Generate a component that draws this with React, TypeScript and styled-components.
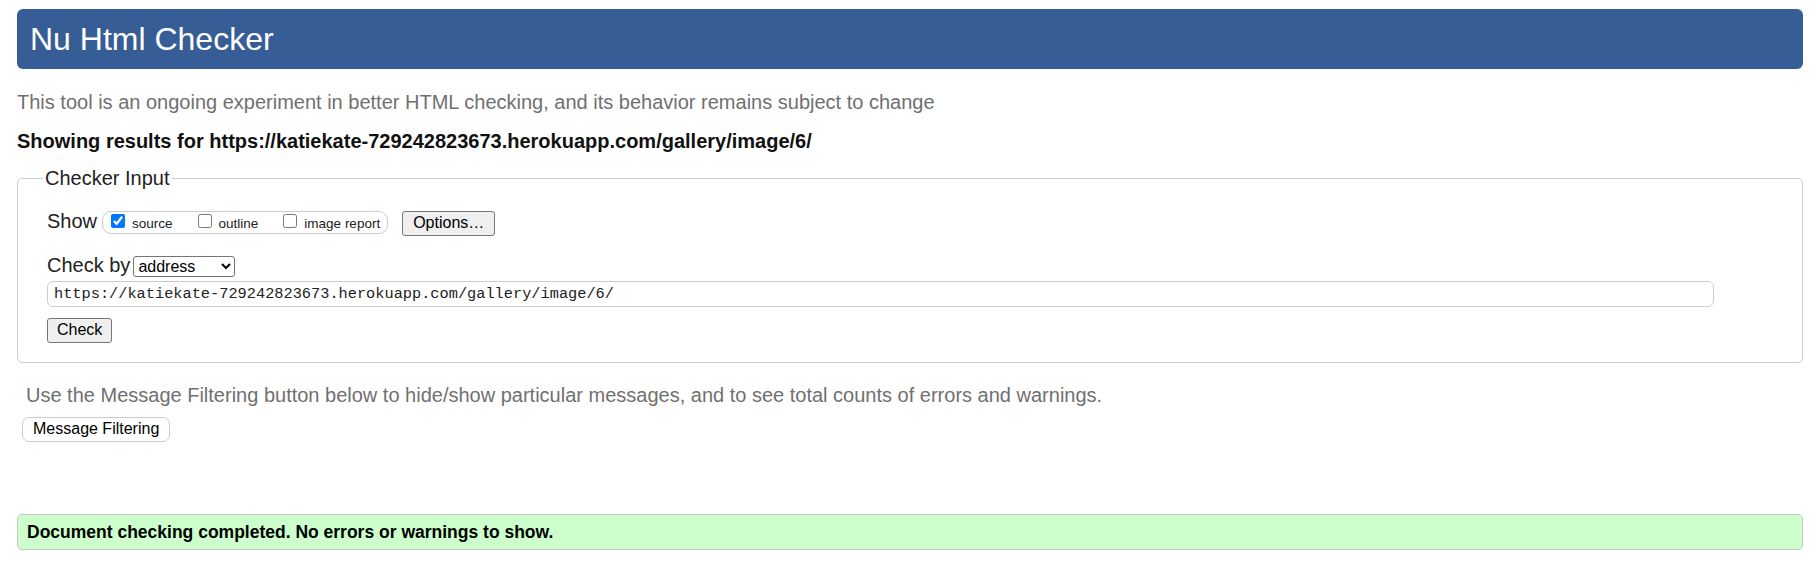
import React from "react";
import styled, { createGlobalStyle } from "styled-components";

const GlobalStyle = createGlobalStyle`
	body {
		margin: 0;
		background: #fff;
		font-family: "Liberation Sans", Arial, sans-serif;
	}
`;

const Page = styled.div`
	padding: 9px 15px 0 17px;
`;

const Title = styled.h1`
	margin: 0;
	padding: 12px 13px;
	background: #365d95;
	color: #fff;
	font-size: 32px;
	font-weight: normal;
	line-height: 36px;
	border-radius: 6px;
`;

const Note = styled.p<{ $indent?: number }>`
	margin: 0;
	padding-left: ${(p) => p.$indent || 0}px;
	font-size: 20px;
	line-height: 23px;
	color: #707070;
`;

const Intro = styled(Note)`
	margin-top: 22px;
`;

const ResultsFor = styled.p`
	margin: 16px 0 0;
	font-size: 20px;
	line-height: 23px;
	font-weight: bold;
	color: #111;
`;

const Fieldset = styled.fieldset`
	margin: 14px 0 0;
	padding: 0;
	min-width: 0;
	border: 1px solid #ccc;
	border-radius: 5px;
`;

const Legend = styled.legend`
	margin-left: 25px;
	padding: 0 2px;
	font-size: 20px;
	line-height: 23px;
	color: #222;
`;

const FieldsetBody = styled.div`
	padding: 20px 88px 19px 29px;
`;

const Row = styled.div<{ $top?: number }>`
	display: flex;
	align-items: baseline;
	margin-top: ${(p) => p.$top || 0}px;
`;

const Label = styled.span`
	font-size: 20px;
	line-height: 23px;
	color: #222;
`;

const Pill = styled.div`
	display: inline-flex;
	align-items: center;
	gap: 25px;
	box-sizing: border-box;
	height: 23px;
	margin-left: 5px;
	padding: 0 7px 0 8px;
	border: 1px solid #ccc;
	border-radius: 9px;
`;

const Option = styled.label`
	display: inline-flex;
	align-items: baseline;
	font-size: 13.5px;
	color: #222;
`;

const Checkbox = styled.input`
	width: 14px;
	height: 14px;
	margin: 0 7px 0 0;
`;

const Button = styled.button<{ $left?: number }>`
	box-sizing: border-box;
	height: 25px;
	margin-left: ${(p) => p.$left || 0}px;
	padding: 0 10px;
	background: #efefef;
	border: 1px solid #767676;
	border-radius: 3px;
	color: #000;
	font-family: "Liberation Sans", Arial, sans-serif;
	font-size: 16px;
	line-height: 1;
`;

const Select = styled.select`
	box-sizing: border-box;
	width: 102px;
	height: 21px;
	margin-left: 3px;
	border: 1px solid #767676;
	border-radius: 3px;
	background: #fff;
	color: #000;
	font-family: "Liberation Sans", Arial, sans-serif;
	font-size: 16px;
`;

const UrlInput = styled.input`
	display: block;
	box-sizing: border-box;
	width: 100%;
	height: 26px;
	margin-top: 4px;
	padding: 0 6px;
	border: 1px solid #ccc;
	border-radius: 6px;
	color: #222;
	font-family: "Liberation Mono", "DejaVu Sans Mono", monospace;
	font-size: 15.3px;
`;

const CheckButton = styled(Button)`
	display: block;
	margin-top: 11px;
	padding: 0 9px;
`;

const Hint = styled(Note)`
	margin-top: 21px;
`;

const FilterButton = styled(Button)`
	display: block;
	margin: 10px 0 0 5px;
	background: #fff;
	border-color: #ccc;
	border-radius: 7px;
`;

const Success = styled.div`
	margin-top: 72px;
	padding: 7px 9px;
	background: #ccffcc;
	border: 1px solid #c4c8c4;
	border-radius: 5px;
	color: #000;
	font-size: 17.5px;
	font-weight: bold;
	line-height: 20px;
`;

const url = "https://katiekate-729242823673.herokuapp.com/gallery/image/6/";

export default function App() {
	return (
		<Page>
			<GlobalStyle />
			<Title>Nu Html Checker</Title>
			<Intro>
				This tool is an ongoing experiment in better HTML checking, and its behavior remains
				subject to change
			</Intro>
			<ResultsFor>Showing results for {url}</ResultsFor>
			<Fieldset>
				<Legend>Checker Input</Legend>
				<FieldsetBody>
					<Row>
						<Label>Show</Label>
						<Pill>
							<Option>
								<Checkbox type="checkbox" defaultChecked />
								source
							</Option>
							<Option>
								<Checkbox type="checkbox" />
								outline
							</Option>
							<Option>
								<Checkbox type="checkbox" />
								image report
							</Option>
						</Pill>
						<Button $left={14}>Options…</Button>
					</Row>
					<Row $top={18}>
						<Label>Check by</Label>
						<Select defaultValue="address">
							<option value="address">address</option>
							<option value="file">file upload</option>
							<option value="text">text input</option>
						</Select>
					</Row>
					<UrlInput type="url" defaultValue={url} />
					<CheckButton>Check</CheckButton>
				</FieldsetBody>
			</Fieldset>
			<Hint $indent={9}>
				Use the Message Filtering button below to hide/show particular messages, and to see total
				counts of errors and warnings.
			</Hint>
			<FilterButton>Message Filtering</FilterButton>
			<Success>Document checking completed. No errors or warnings to show.</Success>
		</Page>
	);
}
